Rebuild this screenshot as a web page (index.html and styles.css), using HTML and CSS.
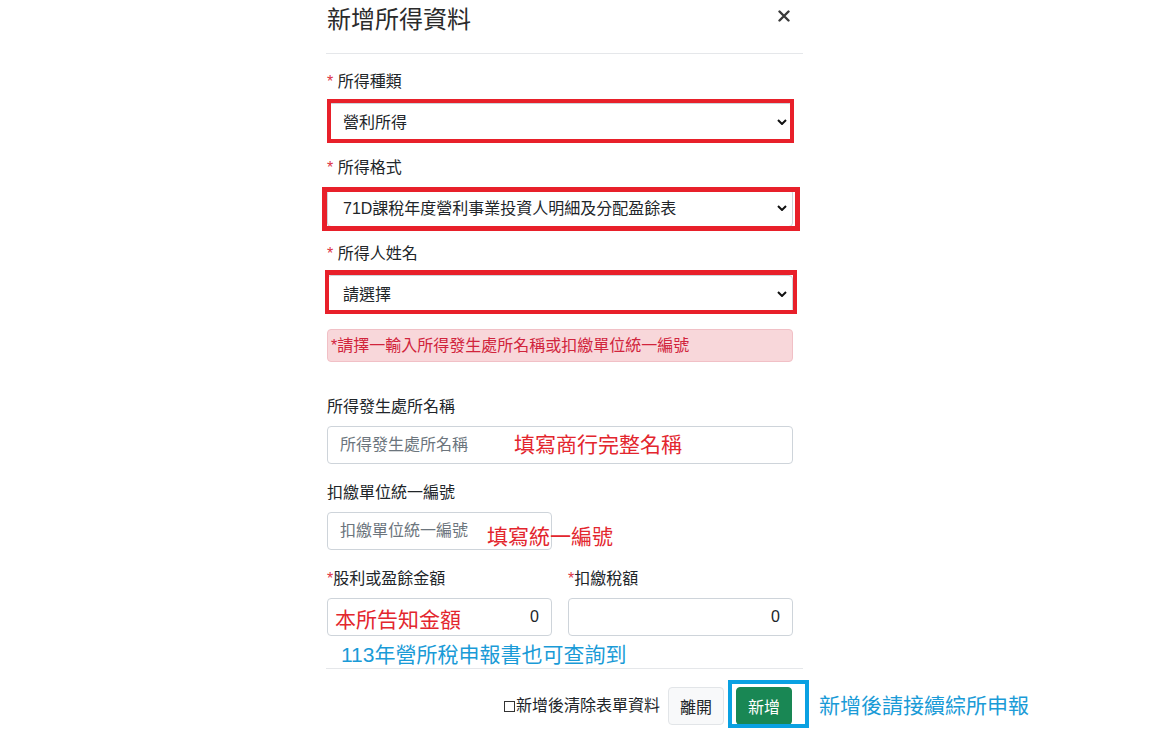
FILE: index.html
```html
<!DOCTYPE html>
<html lang="zh-Hant">
<head>
    <meta charset="UTF-8">
    <meta name="viewport" content="width=device-width, initial-scale=1.0">
    <title>新增所得資料</title>
    <link rel="stylesheet" href="styles.css">
</head>
<body>
    <div class="modal-content">
        <div class="modal-header">
            <h5 class="modal-title">新增所得資料</h5>
            <button class="btn-close" type="button" aria-label="Close">
                <svg width="12" height="12" viewBox="0 0 12 12"><path d="M1.5 1.5 L10.5 10.5 M10.5 1.5 L1.5 10.5" stroke="#3a3a3a" stroke-width="2.4" stroke-linecap="round"/></svg>
            </button>
        </div>

        <div class="modal-body">
            <div class="field">
                <label class="form-label"><span class="req">*</span> 所得種類</label>
                <div class="mark mark-type">
                    <select class="form-select"><option>營利所得</option></select>
                    <svg class="chevron" width="10" height="6" viewBox="0 0 10 6"><path d="M1 1 L5 5 L9 1" fill="none" stroke="#111" stroke-width="2"/></svg>
                </div>
            </div>

            <div class="field">
                <label class="form-label"><span class="req">*</span> 所得格式</label>
                <div class="mark mark-format">
                    <select class="form-select"><option>71D課稅年度營利事業投資人明細及分配盈餘表</option></select>
                    <svg class="chevron" width="10" height="6" viewBox="0 0 10 6"><path d="M1 1 L5 5 L9 1" fill="none" stroke="#111" stroke-width="2"/></svg>
                </div>
            </div>

            <div class="field">
                <label class="form-label"><span class="req">*</span> 所得人姓名</label>
                <div class="mark mark-name">
                    <select class="form-select"><option>請選擇</option></select>
                    <svg class="chevron" width="10" height="6" viewBox="0 0 10 6"><path d="M1 1 L5 5 L9 1" fill="none" stroke="#111" stroke-width="2"/></svg>
                </div>
            </div>

            <div class="alert-danger">*請擇一輸入所得發生處所名稱或扣繳單位統一編號</div>

            <div class="field field-input field-spaced">
                <label class="form-label">所得發生處所名稱</label>
                <div class="input-wrap">
                    <input class="form-control" type="text" placeholder="所得發生處所名稱">
                    <span class="note note-red note-place">填寫商行完整名稱</span>
                </div>
            </div>

            <div class="field field-input">
                <label class="form-label">扣繳單位統一編號</label>
                <div class="input-wrap input-half">
                    <input class="form-control" type="text" placeholder="扣繳單位統一編號">
                    <span class="note note-red note-ban">填寫統一編號</span>
                </div>
            </div>

            <div class="field field-input row">
                <div class="col">
                    <label class="form-label"><span class="req">*</span>股利或盈餘金額</label>
                    <div class="input-wrap">
                        <input class="form-control text-end" type="text" value="0">
                        <span class="note note-red note-amount">本所告知金額</span>
                    </div>
                </div>
                <div class="col">
                    <label class="form-label"><span class="req">*</span>扣繳稅額</label>
                    <input class="form-control text-end" type="text" value="0">
                </div>
            </div>

            <div class="note-blue note-hint">113年營所稅申報書也可查詢到</div>
        </div>

        <div class="modal-footer">
            <label class="check"><input type="checkbox">新增後清除表單資料</label>
            <button class="btn btn-light" type="button">離開</button>
            <button class="btn btn-success" type="button">新增</button>
            <span class="note-blue note-next">新增後請接續綜所申報</span>
        </div>
    </div>
</body>
</html>
```

FILE: styles.css
```css
/* Page base */
body {
    margin: 0;
    background: #fff;
    color: #212529;
    font-family: "Liberation Sans", "Noto Sans CJK TC", sans-serif;
    font-size: 16px;
}

/* Modal frame */
.modal-content {
    position: relative;
    width: 477px;
    margin-left: 326px;
}

.modal-header {
    display: flex;
    justify-content: space-between;
    align-items: flex-start;
    height: 53px;
    padding: 0 13px 0 1px;
    border-bottom: 1px solid #e5e7ea;
}

.modal-title {
    margin: 0;
    font-size: 24px;
    font-weight: 400;
    line-height: 40px;
    color: #2b2b2b;
}

.btn-close {
    margin-top: 10px;
    padding: 0;
    border: 0;
    background: none;
    line-height: 0;
}

.modal-body {
    padding: 17px 10px 1px 1px;
}

/* Form fields */
.field {
    margin-bottom: 16px;
}

.field-input {
    margin-bottom: 18px;
}

.field-spaced {
    margin-top: 34px;
}

.form-label {
    display: block;
    margin-bottom: 10px;
    font-size: 16px;
    line-height: 22px;
}

.field-input .form-label {
    margin-bottom: 8px;
}

.req {
    color: #dc3545;
}

.form-select,
.form-control {
    display: block;
    width: 100%;
    box-sizing: border-box;
    height: 38px;
    margin: 0;
    border: 1px solid #ced4da;
    border-radius: 4px;
    background: #fff;
    color: #212529;
    font-family: inherit;
    font-size: 16px;
}

.form-select {
    appearance: none;
    padding: 0 24px 0 15px;
}

.form-control {
    padding: 0 12px;
}

.form-control::placeholder {
    color: #6c757d;
}

.text-end {
    text-align: right;
}

.chevron {
    position: absolute;
    right: 6px;
    top: 50%;
    margin-top: -3px;
    pointer-events: none;
}

/* Red annotation frames round the selects */
.mark {
    position: relative;
}

.mark::after {
    content: '';
    position: absolute;
    border: 4px solid #e8202a;
    pointer-events: none;
}

.mark-type::after {
    top: -4px;
    left: 0;
    right: -1px;
    bottom: -2px;
}

.mark-format::after {
    top: -2px;
    left: -5px;
    right: -7px;
    bottom: -4px;
    border-width: 5px;
}

.mark-name::after {
    top: -5px;
    left: -2px;
    right: -4px;
    bottom: -1px;
    border-width: 5px 4px 4px 4px;
}

.alert-danger {
    margin-top: 15px;
    padding: 5px 3px;
    border: 1px solid #f1c0c6;
    border-radius: 4px;
    background: #f8d7da;
    color: #d1243c;
    font-size: 16px;
    line-height: 21px;
}

/* Inputs with hand-written notes */
.input-wrap {
    position: relative;
}

.input-half {
    width: 225px;
}

.note {
    position: absolute;
    white-space: nowrap;
    font-size: 21px;
    line-height: 24px;
    pointer-events: none;
}

.note-red {
    color: #e3262e;
}

.note-blue {
    color: #1a9bd7;
    font-size: 21px;
    line-height: 24px;
    white-space: nowrap;
}

.note-place {
    left: 187px;
    top: 7px;
}

.note-ban {
    left: 160px;
    top: 13px;
}

.note-amount {
    left: 8px;
    top: 10px;
}

.row {
    display: flex;
    gap: 16px;
    margin-bottom: 7px;
}

.col {
    flex: 1;
}

.note-hint {
    padding-left: 14px;
}

/* Footer */
.modal-footer {
    display: flex;
    justify-content: flex-end;
    align-items: center;
    gap: 12px;
    padding: 18px 11px 5px 0;
    border-top: 1px solid #e5e7ea;
}

.check {
    display: flex;
    align-items: center;
    margin-right: -4px;
    font-size: 16px;
    line-height: 22px;
}

.check input {
    appearance: none;
    width: 11px;
    height: 11px;
    margin: 0 1px 0 0;
    border: 1px solid #333;
    background: #fff;
}

.btn {
    height: 38px;
    padding: 0 11px;
    border: 1px solid transparent;
    border-radius: 4px;
    font-family: inherit;
    font-size: 16px;
}

.btn-light {
    background: #f8f9fa;
    border-color: #e2e5e8;
    color: #212529;
}

.btn-success {
    position: relative;
    background: #198754;
    border-color: #198754;
    color: #fff;
}

/* Blue annotation frame round the submit button */
.btn-success::after {
    content: '';
    position: absolute;
    top: -8px;
    left: -9px;
    right: -18px;
    bottom: -4px;
    border: 4px solid #0aa1e2;
}

.note-next {
    position: absolute;
    left: 493px;
    bottom: 12px;
}
```
